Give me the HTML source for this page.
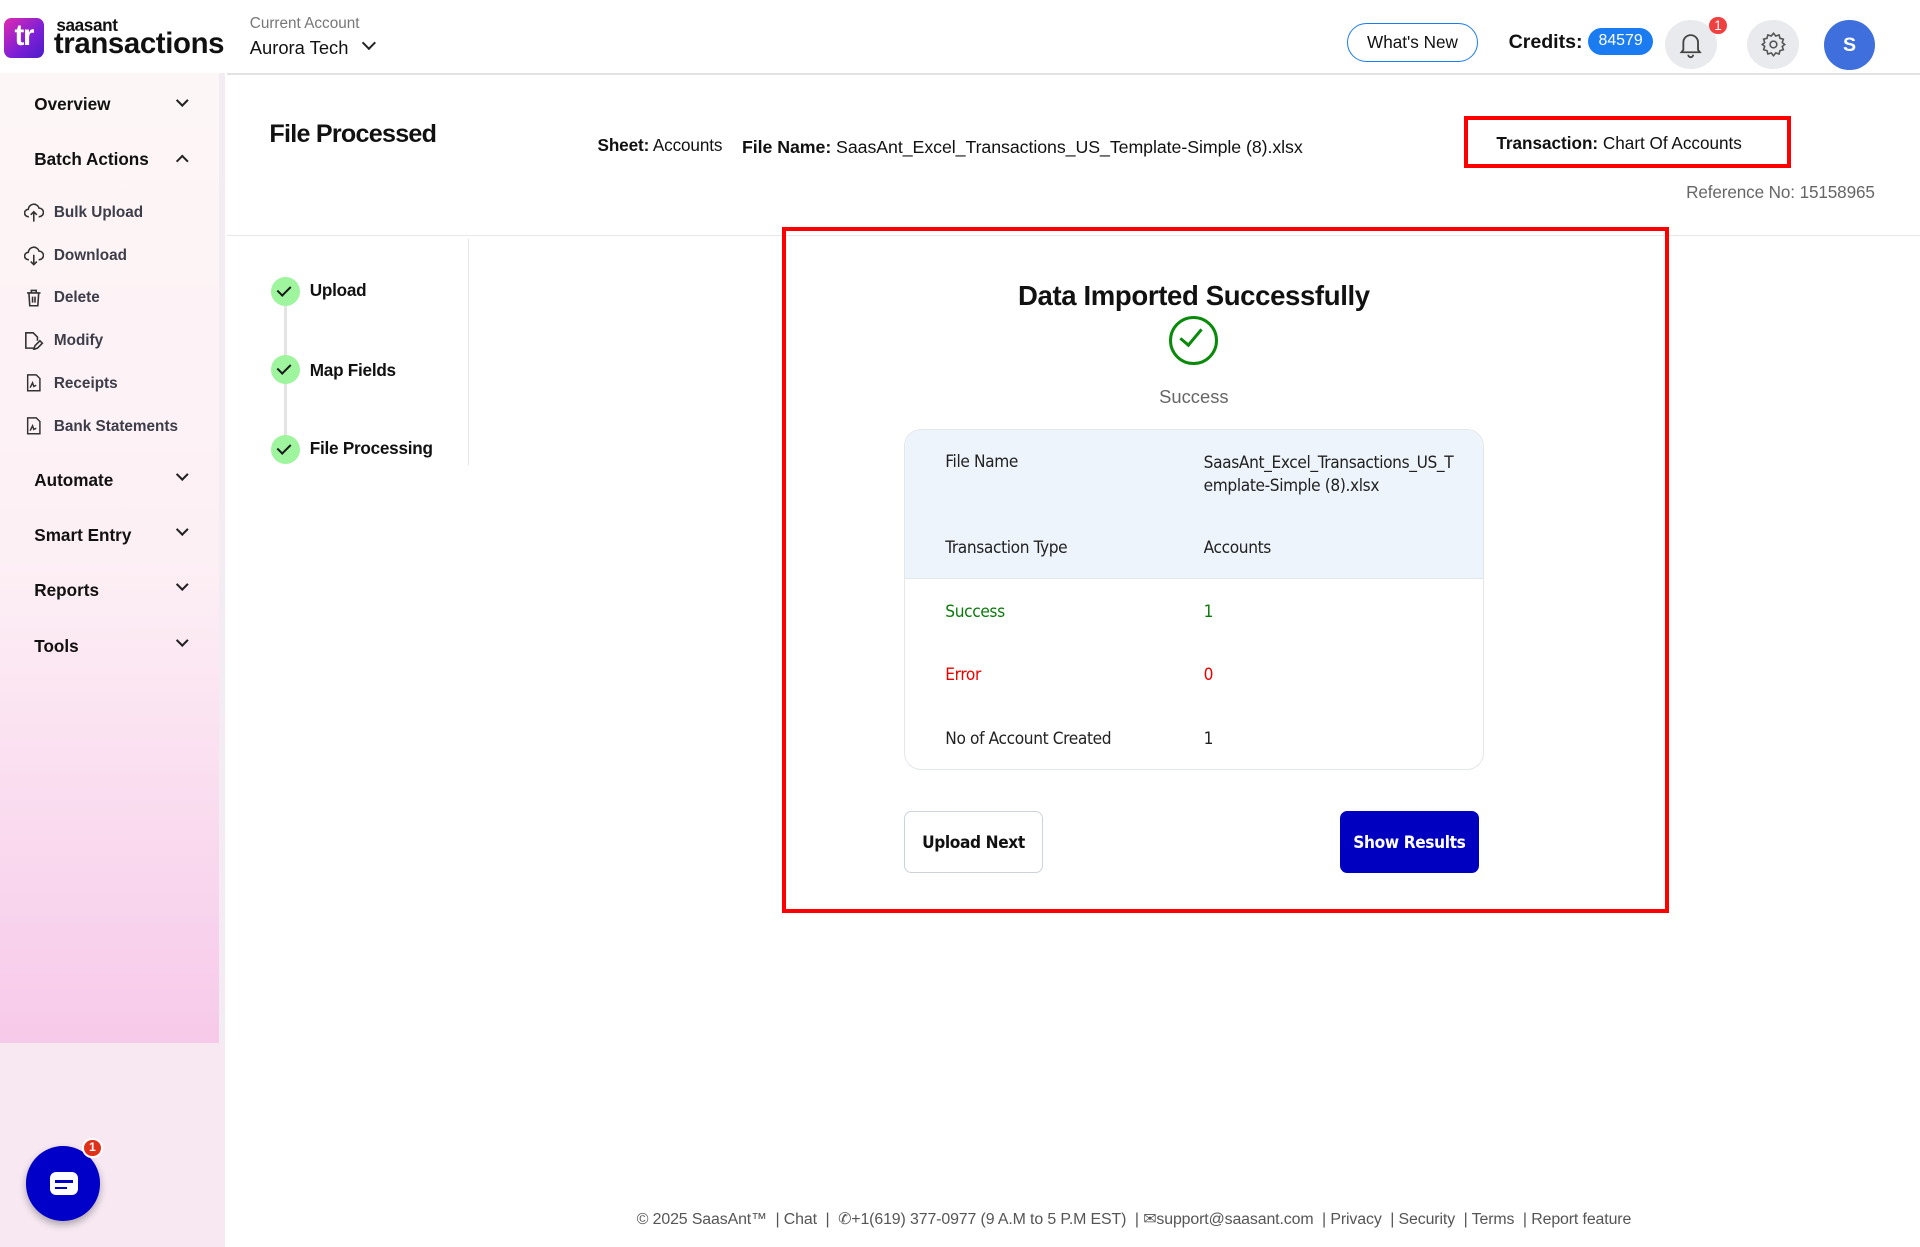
<!DOCTYPE html>
<html><head><meta charset="utf-8"><style>
*{box-sizing:border-box;margin:0;padding:0}
html,body{width:1920px;height:1247px;overflow:hidden;background:#fff}
#w{zoom:1.224490;width:1568px;height:1018.4px;position:relative;font-family:"Liberation Sans",sans-serif;color:#111}
.a{position:absolute;white-space:nowrap}
.side{position:absolute;left:0;top:60px;width:179px;height:792px;background:linear-gradient(#fdf6f6 0%,#fdf0f5 50%,#f7c9ea 100%)}
.sideb{position:absolute;left:0;top:852px;width:184px;height:167px;background:#f7e8f2}
.strip{position:absolute;left:179px;top:60px;width:5px;height:792px;background:#f4ecf3}
.nav{position:absolute;left:28px;font-size:14px;font-weight:bold;color:#111}
.chev{position:absolute;left:145px;width:7px;height:7px;border-right:2px solid #222;border-bottom:2px solid #222}
.sub{position:absolute;left:44px;font-size:12.5px;font-weight:bold;color:#3d3d4a}
.ic{position:absolute;left:20px}
.step{position:absolute;left:221px;width:24px;height:24px;border-radius:50%;background:#9ef59e}
.step:after{content:"";position:absolute;left:8px;top:5px;width:5px;height:9px;border-right:2px solid #1a1a1a;border-bottom:2px solid #1a1a1a;transform:rotate(45deg)}
.sl{position:absolute;left:253px;font-size:14px;font-weight:bold;letter-spacing:-0.2px}
.cell{position:absolute;font-family:"DejaVu Sans Condensed","Liberation Sans Narrow","Liberation Sans",sans-serif;font-size:14px;color:#222;letter-spacing:-0.3px}
</style></head><body><div id="w">
<div class="a" style="left:3px;top:15px;width:33px;height:32px;border-radius:6px;background:linear-gradient(135deg,#e12ab0,#7a1fd6 60%,#4b1cc9);color:#fff;font-weight:bold;font-size:24px;line-height:30px;text-align:center;letter-spacing:-1px">tr</div>
<div class="a" style="left:46px;top:12px;font-size:14px;font-weight:bold;letter-spacing:-0.3px">saasant</div>
<div class="a" style="left:44px;top:22px;font-size:24px;font-weight:bold;letter-spacing:-0.3px;color:#111">transactions</div>
<div class="a" style="left:204px;top:12px;font-size:12.5px;color:#777">Current Account</div>
<div class="a" style="left:204px;top:30px;font-size:15px;color:#111">Aurora Tech</div>
<div class="a" style="left:297px;top:31px;width:8px;height:8px;border-right:2px solid #222;border-bottom:2px solid #222;transform:rotate(45deg)"></div>
<div class="a" style="left:185px;top:60px;width:1383px;height:1px;background:#e2e2e2"></div>
<div class="a" style="left:1100px;top:19px;width:107px;height:32px;border:1px solid #1a7cf0;border-radius:16px;font-size:14px;text-align:center;line-height:30px">What's New</div>
<div class="a" style="left:1232px;top:25px;font-size:16px;font-weight:bold">Credits:</div>
<div class="a" style="left:1297px;top:23px;width:53px;height:22px;border-radius:11px;background:#1a7cf0;color:#fff;font-size:13px;text-align:center;line-height:22px">84579</div>
<div class="a" style="left:1360px;top:16px;width:42px;height:40px;border-radius:50%;background:#e8eaee"></div>
<svg class="a" style="left:1369px;top:24px" width="24" height="24" viewBox="0 0 24 24" fill="none" stroke="#444" stroke-width="1.5"><path d="M6 17V11a6 6 0 0 1 12 0v6l1.5 2h-15z"/><path d="M10 21a2 2 0 0 0 4 0"/></svg>
<div class="a" style="left:1396px;top:14px;width:14px;height:14px;border-radius:50%;background:#f04040;color:#fff;font-size:11px;text-align:center;line-height:14px">1</div>
<div class="a" style="left:1427px;top:16px;width:42px;height:40px;border-radius:50%;background:#e8eaee"></div>
<svg class="a" style="left:1437px;top:25px" width="22" height="22" viewBox="0 0 24 24" fill="none" stroke="#555" stroke-width="1.4"><circle cx="12" cy="12" r="3"/><path d="M12 2l2 2.5 3-1 .8 3 3 .8-1 3L22 12l-2.2 1.7 1 3-3 .8-.8 3-3-1L12 22l-2-2.5-3 1-.8-3-3-.8 1-3L2 12l2.2-1.7-1-3 3-.8.8-3 3 1z"/></svg>
<div class="a" style="left:1490px;top:16px;width:41px;height:41px;border-radius:50%;background:#3e6fdc;color:#fff;font-size:16px;font-weight:bold;text-align:center;line-height:41px">S</div>
<div class="side"></div><div class="strip"></div><div class="sideb"></div>
<div class="nav" style="top:77px">Overview</div><div class="chev" style="top:78px;transform:rotate(45deg)"></div>
<div class="nav" style="top:122px">Batch Actions</div><div class="chev" style="top:128px;transform:rotate(-135deg)"></div>
<svg class="ic" style="top:165px" width="16" height="17" viewBox="0 0 16 17" fill="none" stroke="#333" stroke-width="1.3"><path d="M4 12H3.5A3 3 0 0 1 3.5 6 4.5 4.5 0 0 1 12.3 5 3.3 3.3 0 0 1 12.5 12H12"/><path d="M8 16V8M5.5 10.5 8 8l2.5 2.5"/></svg>
<div class="sub" style="top:167px">Bulk Upload</div>
<svg class="ic" style="top:200px" width="16" height="17" viewBox="0 0 16 17" fill="none" stroke="#333" stroke-width="1.3"><path d="M4 12H3.5A3 3 0 0 1 3.5 6 4.5 4.5 0 0 1 12.3 5 3.3 3.3 0 0 1 12.5 12H12"/><path d="M8 8v8M5.5 13.5 8 16l2.5-2.5"/></svg>
<div class="sub" style="top:202px">Download</div>
<svg class="ic" style="top:235px" width="16" height="16" viewBox="0 0 16 16" fill="none" stroke="#333" stroke-width="1.3"><path d="M2.5 4h11M6 4V2h4v2M4 4l.7 10.5h6.6L12 4M7 7v5M9 7v5"/></svg>
<div class="sub" style="top:236px">Delete</div>
<svg class="ic" style="top:270px" width="16" height="16" viewBox="0 0 16 16" fill="none" stroke="#333" stroke-width="1.3"><path d="M9 14H1.5V1.5h6L11 5v3"/><path d="M8 15l1-3 4-4 2 2-4 4z"/></svg>
<div class="sub" style="top:271px">Modify</div>
<svg class="ic" style="top:305px" width="16" height="16" viewBox="0 0 16 16" fill="none" stroke="#333" stroke-width="1.2"><path d="M3 1.5h7l3 3v10H3z M5 12l2-4 1 3 2-1"/></svg>
<div class="sub" style="top:306px">Receipts</div>
<svg class="ic" style="top:340px" width="16" height="16" viewBox="0 0 16 16" fill="none" stroke="#333" stroke-width="1.2"><path d="M3 1.5h7l3 3v10H3z M5 12l2-4 1 3 2-1"/></svg>
<div class="sub" style="top:341px">Bank Statements</div>
<div class="nav" style="top:384px">Automate</div><div class="chev" style="top:384px;transform:rotate(45deg)"></div>
<div class="nav" style="top:429px">Smart Entry</div><div class="chev" style="top:429px;transform:rotate(45deg)"></div>
<div class="nav" style="top:474px">Reports</div><div class="chev" style="top:474px;transform:rotate(45deg)"></div>
<div class="nav" style="top:519px">Tools</div><div class="chev" style="top:519px;transform:rotate(45deg)"></div>
<div class="a" style="left:21px;top:936px;width:61px;height:61px;border-radius:50%;background:#0000c8;box-shadow:0 3px 6px rgba(0,0,0,.3)"></div>
<div class="a" style="left:41px;top:957px;width:23px;height:19px;border-radius:5px;background:#fff"></div>
<div class="a" style="left:45px;top:964px;width:15px;height:2px;background:#0000c8"></div>
<div class="a" style="left:45px;top:969px;width:10px;height:2px;background:#0000c8"></div>
<div class="a" style="left:67px;top:929px;width:17px;height:17px;border-radius:50%;background:#e0301a;border:2px solid #fff;color:#fff;font-size:10px;font-weight:bold;text-align:center;line-height:13px">1</div>
<div class="a" style="left:220px;top:98px;font-size:20.5px;font-weight:bold;letter-spacing:-0.6px">File Processed</div>
<div class="a" style="left:488px;top:110px;font-size:14px;letter-spacing:-0.1px"><b>Sheet:</b> Accounts</div>
<div class="a" style="left:606px;top:112px;font-size:14.5px;letter-spacing:-0.05px"><b>File Name:</b> SaasAnt_Excel_Transactions_US_Template-Simple (8).xlsx</div>
<div class="a" style="left:1196px;top:95px;width:267px;height:42px;border:4px solid #f00"></div>
<div class="a" style="left:1222px;top:109px;font-size:14px;letter-spacing:0px"><b>Transaction:</b> Chart Of Accounts</div>
<div class="a" style="left:1377px;top:149px;font-size:14px;color:#666;letter-spacing:-0.1px">Reference No: 15158965</div>
<div class="a" style="left:185px;top:192px;width:1383px;height:1px;background:#e8e8e8"></div>
<div class="a" style="left:382px;top:195px;width:1px;height:185px;background:#e6e6e6"></div>
<div class="a" style="left:232px;top:248px;width:2px;height:110px;background:#e4e4e4"></div>
<div class="step" style="top:226px"></div><div class="sl" style="top:229px">Upload</div>
<div class="step" style="top:290px"></div><div class="sl" style="top:294px">Map Fields</div>
<div class="step" style="top:355px"></div><div class="sl" style="top:358px">File Processing</div>
<div class="a" style="left:639px;top:185px;width:724px;height:561px;border:4px solid #f00"></div>
<div class="a" style="left:775px;top:229px;width:400px;text-align:center;font-size:22.5px;font-weight:bold;letter-spacing:-0.3px">Data Imported Successfully</div>
<div class="a" style="left:955px;top:258px;width:40px;height:40px;border-radius:50%;border:3px solid #0a8a0a"></div>
<div class="a" style="left:968px;top:265px;width:10px;height:18px;border-right:3px solid #0a8a0a;border-bottom:3px solid #0a8a0a;transform:rotate(40deg)"></div>
<div class="a" style="left:875px;top:315px;width:200px;text-align:center;font-size:15px;color:#666">Success</div>
<div class="a" style="left:738px;top:350px;width:474px;height:279px;border:1.5px solid #e3e6ea;border-radius:14px;overflow:hidden">
 <div style="height:122px;background:#eef4fb;border-bottom:1.5px solid #e3e6ea"></div>
</div>
<div class="cell" style="left:772px;top:369px">File Name</div>
<div class="cell" style="left:983px;top:369px;line-height:19px">SaasAnt_Excel_Transactions_US_T<br>emplate-Simple (8).xlsx</div>
<div class="cell" style="left:772px;top:439px">Transaction Type</div>
<div class="cell" style="left:983px;top:439px">Accounts</div>
<div class="cell" style="left:772px;top:492px;color:#0a7a0a">Success</div>
<div class="cell" style="left:983px;top:492px;color:#0a7a0a">1</div>
<div class="cell" style="left:772px;top:543px;color:#e00">Error</div>
<div class="cell" style="left:983px;top:543px;color:#e00">0</div>
<div class="cell" style="left:772px;top:595px">No of Account Created</div>
<div class="cell" style="left:983px;top:595px">1</div>
<div class="a" style="left:738px;top:662px;width:114px;height:51px;border:1px solid #cdd3da;border-radius:6px;text-align:center;line-height:51px;font-family:'DejaVu Sans Condensed','Liberation Sans',sans-serif;font-size:14px;font-weight:bold;letter-spacing:-0.3px">Upload Next</div>
<div class="a" style="left:1094px;top:662px;width:114px;height:51px;background:#0000c0;border-radius:6px;text-align:center;line-height:53px;color:#fff;font-family:'DejaVu Sans Condensed','Liberation Sans',sans-serif;font-size:14px;font-weight:bold;letter-spacing:-0.3px">Show Results</div>
<div class="a" style="left:520px;top:987px;font-size:13px;color:#555;letter-spacing:-0.1px">© 2025 SaasAnt™ &nbsp;| Chat &nbsp;| &nbsp;✆+1(619) 377-0977 (9 A.M to 5 P.M EST) &nbsp;| ✉support@saasant.com &nbsp;| Privacy &nbsp;| Security &nbsp;| Terms &nbsp;| Report feature</div>
</div></body></html>
